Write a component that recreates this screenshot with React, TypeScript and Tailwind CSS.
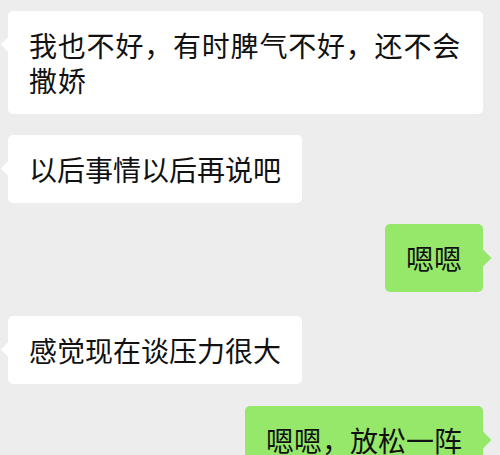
const font = {
  fontFamily: '"Noto Sans CJK SC", "Noto Sans", sans-serif',
};

function Incoming({ text, className = "", wide = false }: { text: string; className?: string; wide?: boolean }) {
  return (
    <div className={"flex justify-start pl-2 " + className}>
      <div
        className={
          "relative bg-white rounded-[5px] pl-[21px] pt-[17px] pb-[16px] text-[28px] leading-[35px] text-[#111111] " +
          (wide ? "w-[475px] pr-[15px] tracking-[0.8px]" : "pr-[21px]")
        }
      >
        <span className="absolute left-[-5px] top-[28px] size-[11px] rotate-45 bg-white" />
        <span className="relative">{text}</span>
      </div>
    </div>
  );
}

function Outgoing({ text, className = "" }: { text: string; className?: string }) {
  return (
    <div className={"flex justify-end pr-[17px] " + className}>
      <div className="relative bg-[#95e86a] rounded-[5px] px-[21px] pt-[17px] pb-[16px] text-[28px] leading-[35px] text-[#111111]">
        <span className="absolute right-[-6px] top-[28px] size-[12px] rotate-45 bg-[#95e86a]" />
        <span className="relative">{text}</span>
      </div>
    </div>
  );
}

export default function App() {
  return (
    <main className="h-[455px] w-[500px] overflow-hidden bg-[#ededed]" style={font}>
      <div className="flex flex-col pt-[11px]">
        <Incoming wide text="我也不好，有时脾气不好，还不会撒娇" />
        <Incoming className="mt-[21px]" text="以后事情以后再说吧" />
        <Outgoing className="mt-[21px]" text="嗯嗯" />
        <Incoming className="mt-[24px]" text="感觉现在谈压力很大" />
        <Outgoing className="mt-[22px]" text="嗯嗯，放松一阵" />
      </div>
    </main>
  );
}
